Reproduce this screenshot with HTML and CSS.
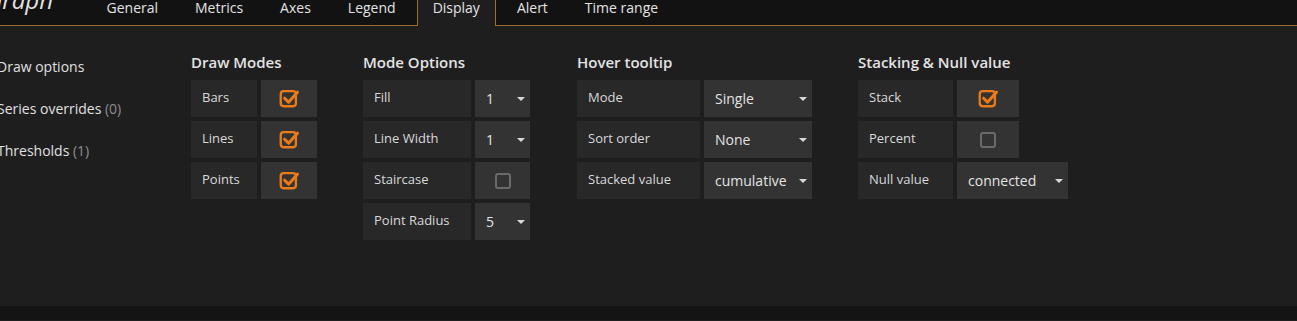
FILE: index.html
```html
<!DOCTYPE html>
<html lang="en">
  <head>
    <meta charset="UTF-8" />
    <title>Graph - Display</title>
    <link rel="stylesheet" href="styles.css">
  </head>
  <body>
    <nav class="tabbar">
      <span class="title">Graph</span>
      <a class="tab">General</a>
      <a class="tab">Metrics</a>
      <a class="tab">Axes</a>
      <a class="tab">Legend</a>
      <a class="tab active">Display</a>
      <a class="tab">Alert</a>
      <a class="tab">Time range</a>
    </nav>

    <main class="panel">
      <ul class="sidebar">
        <li>Draw options</li>
        <li>Series overrides <span class="count">(0)</span></li>
        <li>Thresholds <span class="count">(1)</span></li>
      </ul>

      <section class="group">
        <h5>Draw Modes</h5>
        <div class="row">
          <label class="lbl w66">Bars</label>
          <div class="val w56"><svg class="chk" viewBox="0 0 18 18"><rect x="1.5" y="3.5" width="13" height="13" rx="2.5"/><path d="M4.8 9.6 L8.2 13 L15.8 4.4"/></svg></div>
        </div>
        <div class="row">
          <label class="lbl w66">Lines</label>
          <div class="val w56"><svg class="chk" viewBox="0 0 18 18"><rect x="1.5" y="3.5" width="13" height="13" rx="2.5"/><path d="M4.8 9.6 L8.2 13 L15.8 4.4"/></svg></div>
        </div>
        <div class="row">
          <label class="lbl w66">Points</label>
          <div class="val w56"><svg class="chk" viewBox="0 0 18 18"><rect x="1.5" y="3.5" width="13" height="13" rx="2.5"/><path d="M4.8 9.6 L8.2 13 L15.8 4.4"/></svg></div>
        </div>
      </section>

      <section class="group">
        <h5>Mode Options</h5>
        <div class="row">
          <label class="lbl w108">Fill</label>
          <div class="val sel w55">1</div>
        </div>
        <div class="row">
          <label class="lbl w108">Line Width</label>
          <div class="val sel w55">1</div>
        </div>
        <div class="row">
          <label class="lbl w108">Staircase</label>
          <div class="val w55"><span class="box"></span></div>
        </div>
        <div class="row">
          <label class="lbl w108">Point Radius</label>
          <div class="val sel w55">5</div>
        </div>
      </section>

      <section class="group">
        <h5>Hover tooltip</h5>
        <div class="row">
          <label class="lbl w123">Mode</label>
          <div class="val sel w108">Single</div>
        </div>
        <div class="row">
          <label class="lbl w123">Sort order</label>
          <div class="val sel w108">None</div>
        </div>
        <div class="row">
          <label class="lbl w123">Stacked value</label>
          <div class="val sel w108">cumulative</div>
        </div>
      </section>

      <section class="group">
        <h5>Stacking &amp; Null value</h5>
        <div class="row">
          <label class="lbl w95">Stack</label>
          <div class="val w62"><svg class="chk" viewBox="0 0 18 18"><rect x="1.5" y="3.5" width="13" height="13" rx="2.5"/><path d="M4.8 9.6 L8.2 13 L15.8 4.4"/></svg></div>
        </div>
        <div class="row">
          <label class="lbl w95">Percent</label>
          <div class="val w62"><span class="box"></span></div>
        </div>
        <div class="row">
          <label class="lbl w95">Null value</label>
          <div class="val sel w111">connected</div>
        </div>
      </section>
    </main>

    <footer class="foot"></footer>
  </body>
</html>
```

FILE: styles.css
```css
* {
  margin: 0;
  padding: 0;
  box-sizing: border-box;
}

body {
  background-color: #1f1e1f;
  font-family: "Open Sans", "Liberation Sans", sans-serif;
  color: #d8d9da;
  overflow: hidden;
}

/* tabs */
.tabbar {
  display: flex;
  align-items: flex-start;
  height: 26px;
  background-color: #121212;
  border-bottom: 1px solid #9a7032;
}
.title {
  width: 102px;
  margin-left: -14px;
  margin-top: -14px;
  font-size: 24px;
  font-style: italic;
  color: #e3e3e3;
  line-height: 28px;
}
.tab {
  display: block;
  height: 26px;
  margin: 0 2.5px;
  padding: 0 15px;
  font-size: 14px;
  line-height: 16px;
  color: #e3e3e3;
  border: 1px solid transparent;
  border-top: none;
  border-bottom: none;
}
.tab.active {
  background-color: #1f1e1f;
  border-color: #9a7032;
  margin-bottom: -1px;
}

/* panel */
.panel {
  display: flex;
  align-items: flex-start;
  height: 280px;
  padding-top: 28px;
}

.sidebar {
  list-style: none;
  width: 191px;
  margin-top: 3px;
}
.sidebar li {
  margin-left: -3px;
  font-size: 14px;
  line-height: 20px;
  margin-bottom: 22px;
  color: #e0e0e0;
}
.count {
  color: #8e8e8e;
}

.group {
  margin-right: 46px;
}
.group:nth-of-type(2) {
  margin-right: 47px;
}
.group h5 {
  font-size: 15px;
  font-weight: 600;
  line-height: 17px;
  margin-bottom: 9px;
  color: #e3e3e3;
}

.row {
  display: flex;
  gap: 4px;
  margin-bottom: 4px;
}
.lbl {
  height: 37px;
  padding-left: 11px;
  background-color: #282828;
  font-size: 13px;
  line-height: 35px;
  color: #d8d9da;
}
.val {
  position: relative;
  height: 37px;
  background-color: #333333;
  display: flex;
  align-items: center;
  justify-content: center;
}
.sel {
  justify-content: flex-start;
  padding-left: 11px;
  font-size: 14px;
  color: #e3e3e3;
}
.sel::after {
  content: "";
  position: absolute;
  right: 5px;
  top: 17px;
  border-left: 4px solid transparent;
  border-right: 4px solid transparent;
  border-top: 4px solid #d8d9da;
}

.w55 { width: 55px; }
.w56 { width: 56px; }
.w62 { width: 62px; }
.w66 { width: 66px; }
.w95 { width: 95px; }
.w108 { width: 108px; }
.w111 { width: 111px; }
.w123 { width: 123px; }

.chk {
  width: 21px;
  height: 21px;
  margin-top: -2px;
  fill: none;
  stroke: #eb7b18;
}
.chk rect {
  stroke-width: 2;
}
.chk path {
  stroke-width: 2.6;
  stroke-linecap: round;
  stroke-linejoin: round;
}
.box {
  width: 16px;
  height: 16px;
  border: 2px solid #6a6a6a;
  border-radius: 3px;
}

.foot {
  height: 14px;
  background-color: #141414;
}
```
